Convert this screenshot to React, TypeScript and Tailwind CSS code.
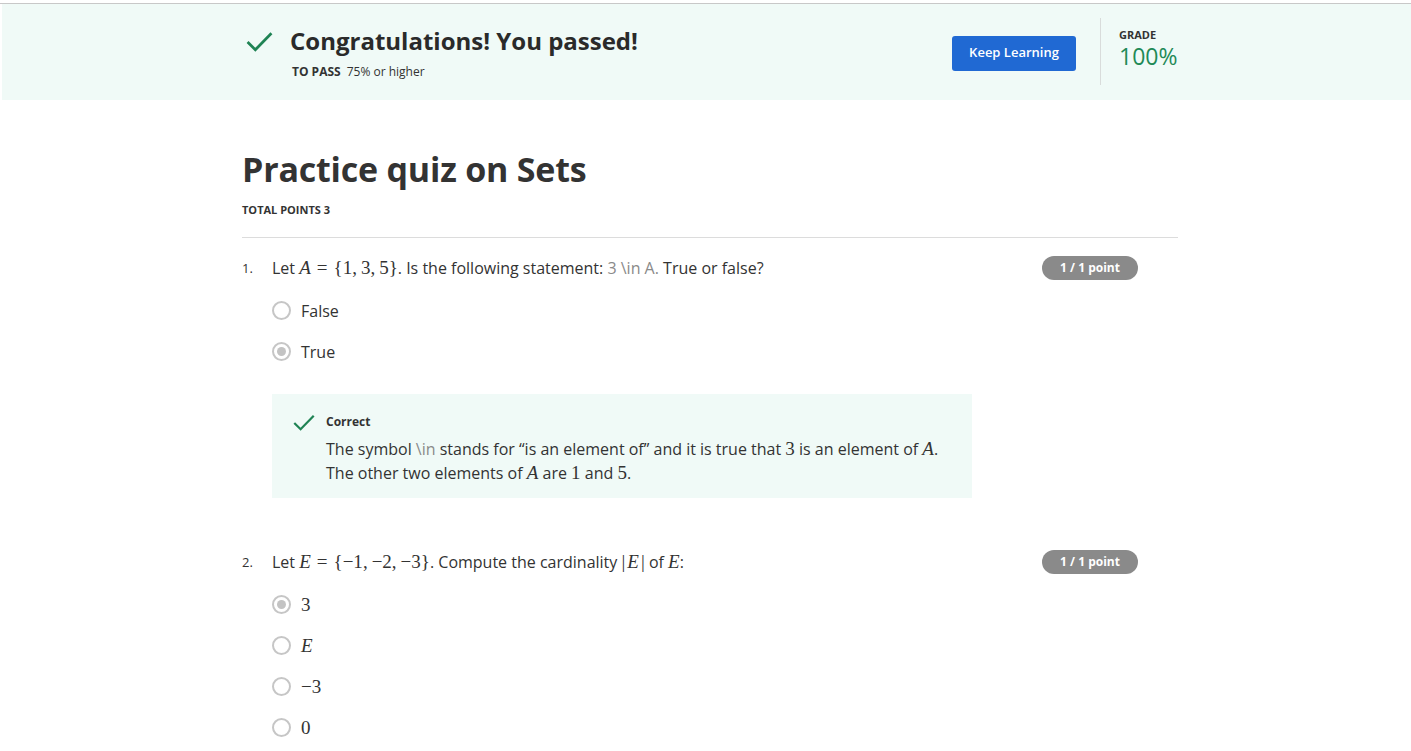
import React from 'react';

const sans = { fontFamily: '"Open Sans", "Noto Sans", sans-serif' };
const tex = { fontFamily: '"Liberation Serif", "DejaVu Serif", serif' };

function Check({ className }: { className?: string }) {
  return (
    <svg viewBox="0 0 26 20" className={className} fill="none">
      <path d="M1.5 10.5 L9 18 L24.5 2" stroke="#1f8354" strokeWidth="2.6" />
    </svg>
  );
}

function M({ children, italic }: { children: React.ReactNode; italic?: boolean }) {
  return (
    <span style={tex} className={italic ? 'italic text-[19px] leading-none' : 'text-[19px] leading-none'}>
      {children}
    </span>
  );
}

// set like {1, 3, 5} with KaTeX-ish spacing
function MSet({ name, items }: { name: string; items: string[] }) {
  return (
    <span style={tex} className="text-[19px] leading-none">
      <span className="italic">{name}</span>
      <span className="mx-[6px]">=</span>
      <span>{'{'}</span>
      {items.map((it, i) => (
        <span key={i}>
          {it}
          {i < items.length - 1 && <span className="mr-[4px]">,</span>}
        </span>
      ))}
      <span>{'}'}</span>
    </span>
  );
}

function Radio({ checked, children }: { checked?: boolean; children: React.ReactNode }) {
  return (
    <div className="flex items-center h-[41px]">
      <span className="w-[19px] h-[19px] rounded-full border-2 border-[#c6c6c6] flex items-center justify-center shrink-0">
        {checked && <span className="w-[9px] h-[9px] rounded-full bg-[#c3c3c3]" />}
      </span>
      <span className="ml-[10px] text-[16px] text-[#333]">{children}</span>
    </div>
  );
}

function Badge() {
  return (
    <span className="w-[96px] h-[24px] rounded-full bg-[#8a8a8a] text-white text-[12px] font-bold flex items-center justify-center shrink-0">
      1 / 1 point
    </span>
  );
}

export default function App() {
  return (
    <div className="bg-white min-h-[751px] pt-[3px]" style={sans}>
      <div className="border-t border-[#c8c8c8]" />
      {/* banner */}
      <div className="ml-[2px] bg-[#f0faf7] h-[96px]">
        <div className="ml-[242px] w-[936px] h-full flex items-center">
          <div className="flex-1 pt-[5px]">
            <div className="flex items-center">
              <Check className="w-[27px] h-[21px] ml-[2px] mt-[2px]" />
              <h1 className="ml-[17px] text-[24px] font-bold text-[#2a2a2a] leading-none">
                Congratulations! You passed!
              </h1>
            </div>
            <div className="ml-[48px] mt-[10px] text-[12px] text-[#333]">
              <span className="font-bold">TO PASS</span>
              <span className="ml-[6px]">75% or higher</span>
            </div>
          </div>
          <button className="w-[124px] h-[35px] rounded-[3px] bg-[#2069d3] text-white text-[13px] font-semibold mr-[24px] mt-[2px]">
            Keep Learning
          </button>
          <div className="w-px h-[67px] bg-[#d9dcdb] self-center -mt-[2px]" />
          <div className="ml-[18px] w-[61px] -mt-[8px]">
            <div className="text-[11px] font-bold text-[#333] leading-none">GRADE</div>
            <div className="text-[23px] text-[#1f8a57] leading-none mt-[5px]">100%</div>
          </div>
        </div>
      </div>

      {/* quiz */}
      <div className="ml-[242px] w-[936px]">
        <h2 className="mt-[47px] text-[34px] font-bold text-[#333] leading-[44px] tracking-[-0.2px]">
          Practice quiz on Sets
        </h2>
        <div className="mt-[13px] text-[11px] font-bold text-[#333] leading-none">TOTAL POINTS 3</div>
        <div className="mt-[22px] border-t border-[#dcdcdc]" />

        {/* Q1 */}
        <div className="mt-[18px] flex items-start pr-[40px]">
          <span className="w-[30px] text-[13px] text-[#333] leading-[24px]">1.</span>
          <div className="flex-1">
            <div className="text-[16px] text-[#333] leading-[24px]">
              Let <MSet name="A" items={['1', '3', '5']} />. Is the following statement:{' '}
              <span className="text-[#8a8a8a]">3 \in A.</span> True or false?
            </div>
            <div className="mt-[10px]">
              <Radio>False</Radio>
              <Radio checked>True</Radio>
            </div>
          </div>
          <Badge />
        </div>

        <div className="ml-[30px] mt-[22px] w-[700px] bg-[#f0faf7] pl-[21px] pr-[20px] pt-[20px] pb-[13px] flex items-start">
          <Check className="w-[22px] h-[17px] shrink-0" />
          <div className="ml-[11px]">
            <div className="text-[12px] font-bold text-[#333] leading-[16px]">Correct</div>
            <div className="mt-[7px] text-[16px] text-[#333] leading-[24px]">
              The symbol <span className="text-[#8a8a8a]">\in</span> stands for “is an element of” and it is true that{' '}
              <M>3</M> is an element of <M italic>A</M>.
              <br />
              The other two elements of <M italic>A</M> are <M>1</M> and <M>5</M>.
            </div>
          </div>
        </div>

        {/* Q2 */}
        <div className="mt-[52px] flex items-start pr-[40px]">
          <span className="w-[30px] text-[13px] text-[#333] leading-[24px]">2.</span>
          <div className="flex-1">
            <div className="text-[16px] text-[#333] leading-[24px]">
              Let <MSet name="E" items={['−1', '−2', '−3']} />. Compute the cardinality{' '}
              <M>
                <span className="mr-[2px]">|</span>
                <span className="italic mr-[2px]">E</span>|
              </M>{' '}
              of <M italic>E</M>:
            </div>
            <div className="mt-[10px]">
              <Radio checked><M>3</M></Radio>
              <Radio><M italic>E</M></Radio>
              <Radio><M>−3</M></Radio>
              <Radio><M>0</M></Radio>
            </div>
          </div>
          <Badge />
        </div>
      </div>
    </div>
  );
}
